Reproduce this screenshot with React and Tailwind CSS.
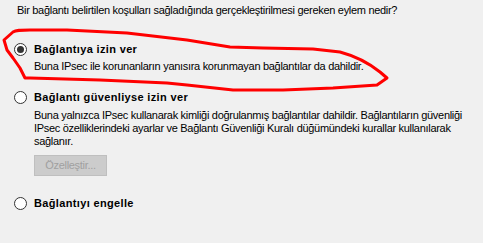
const Radio = ({ checked }) => (
  <span className="relative flex h-[13px] w-[13px] shrink-0 items-center justify-center rounded-full border border-[#333333] bg-white">
    {checked && <span className="h-[7px] w-[7px] rounded-full bg-[#333333]" />}
  </span>
);

const Option = ({ checked, label }) => (
  <div className="flex items-center gap-[7px] pl-[14px]">
    <Radio checked={checked} />
    <span className="font-bold tracking-[0.35px] text-black leading-[13px]">{label}</span>
  </div>
);

export default function App() {
  return (
    <div
      className="relative h-[243px] w-[483px] overflow-hidden bg-[#f0f0f0] text-[11px] tracking-[-0.3px] text-black"
      style={{ fontFamily: '"Liberation Sans", Arial, sans-serif' }}
    >
      <p className="whitespace-nowrap pl-[17px] pt-[4px] leading-[13px]">
        Bir bağlantı belirtilen koşulları sağladığında gerçekleştirilmesi gereken eylem nedir?
      </p>

      <div className="mt-[26px]">
        <Option checked label="Bağlantıya izin ver" />
        <p className="mt-[4px] whitespace-nowrap pl-[34px] leading-[13px]">
          Buna IPsec ile korunanların yanısıra korunmayan bağlantılar da dahildir.
        </p>
      </div>

      <div className="mt-[18px]">
        <Option label="Bağlantı güvenliyse izin ver" />
        <p className="mt-[5px] whitespace-nowrap pl-[34px] leading-[13px]">
          Buna yalnızca IPsec kullanarak kimliği doğrulanmış bağlantılar dahildir. Bağlantıların güvenliği
          <br />
          IPsec özelliklerindeki ayarlar ve Bağlantı Güvenliği Kuralı düğümündeki kurallar kullanılarak
          <br />
          sağlanır.
        </p>
        <div className="mt-[7px] pl-[34px]">
          <button
            disabled
            className="flex h-[21px] w-[73px] items-center justify-center border border-[#bfbfbf] bg-[#cccccc] text-[#a0a0a0]"
          >
            Özelleştir...
          </button>
        </div>
      </div>

      <div className="mt-[21px]">
        <Option label="Bağlantıyı engelle" />
      </div>

      <svg className="pointer-events-none absolute left-0 top-0" width="483" height="243">
        <path
          d="M13 32 C16 30 20 30 30 30 L67 30 L127 33 L187 40 L230 47 L263 48 L313 49 L340 52 C355 56 370 64 380 72 L387 78 L377 85 L333 88 L283 90 L233 90 L187 85 L167 83 L100 80 L30 78 L25 78 L20 68 L13 58 L7 50 L4 40 Z"
          fill="none"
          stroke="#ff0000"
          strokeWidth="3"
          strokeLinejoin="round"
        />
      </svg>
    </div>
  );
}
